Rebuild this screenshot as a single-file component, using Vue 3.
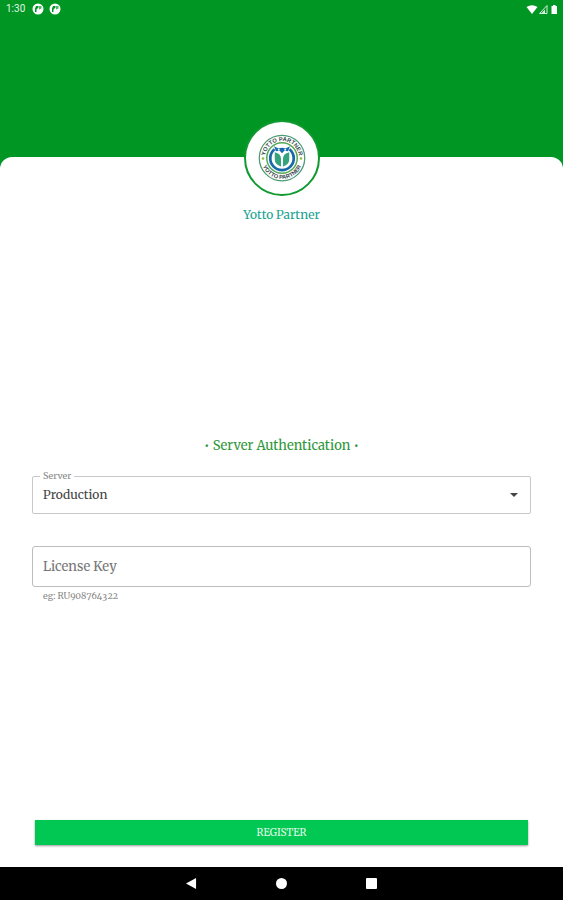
<script setup>
import { ref } from 'vue'

const server = ref('production')
const licenseKey = ref('')
</script>

<template>
  <div class="screen">
    <header class="status">
      <div class="status-left">
        <span>1:30</span>
        <svg v-for="n in 2" :key="n" class="notice" viewBox="0 0 24 24" aria-hidden="true">
          <circle cx="12" cy="12" r="11" fill="#fff" />
          <path d="M8 6H13V9L9 13V18H6V11Z" fill="#009624" />
          <path d="M14 6H19V11L14 13Z" fill="#4db466" />
        </svg>
      </div>
      <svg class="signals" viewBox="0 0 66 22" aria-hidden="true">
        <path d="M1 6Q12-1 23 6L12 20Z" fill="#fff" />
        <path d="M27 19L42 3V19Z" fill="none" stroke="#d5efd9" stroke-width="2" />
        <path d="M31 18L38 11V18Z" fill="#d5efd9" />
        <path d="M51 4h3V2h5v2h3v16H51Z" fill="#fff" />
      </svg>
    </header>

    <main class="sheet">
      <div class="brand">
        <div class="badge">
          <svg class="logo" viewBox="0 0 192 192" role="img" aria-label="Yotto Partner">
            <defs>
              <path id="arc-top" d="M28 96A68 68 0 0 1 164 96" />
              <path id="arc-bottom" d="M12 96A84 84 0 0 0 180 96" />
            </defs>
            <circle cx="96" cy="96" r="91" fill="#fff" stroke="#4c9b72" stroke-width="5" />
            <circle cx="96" cy="96" r="61" fill="#fff" stroke="#55a955" stroke-width="6" />
            <text class="seal-text">
              <textPath href="#arc-top" startOffset="50%" text-anchor="middle">YOTTO PARTNER</textPath>
            </text>
            <text class="seal-text">
              <textPath href="#arc-bottom" startOffset="50%" text-anchor="middle">YOTTO PARTNER</textPath>
            </text>
            <circle cx="20" cy="98" r="5" fill="#8bbf3d" />
            <circle cx="172" cy="98" r="5" fill="#8bbf3d" />
            <path d="M66 61A47 47 0 1 0 126 61" fill="none" stroke="#1769a9" stroke-width="11" />
            <path d="M64 49L82 58Q96 52 110 58L128 49L120 69L105 67L96 77L87 67L72 69Z" fill="#1769a9" />
            <circle cx="83" cy="63" r="4" fill="#dff2fa" />
            <circle cx="109" cy="63" r="4" fill="#dff2fa" />
            <path d="M67 73Q92 78 92 99V130Q67 122 67 100Z" fill="#35a37c" />
            <path d="M125 73Q100 78 100 99V130Q125 122 125 100Z" fill="#35a37c" />
          </svg>
        </div>
        <h1>Yotto Partner</h1>
      </div>

      <form id="register-form" class="form" @submit.prevent>
        <h2>• Server Authentication •</h2>
        <fieldset class="server">
          <legend><label for="server">Server</label></legend>
          <select id="server" v-model="server">
            <option value="production">Production</option>
          </select>
          <svg class="caret" viewBox="0 0 8 4" aria-hidden="true">
            <path d="M0 0h8L4 4Z" fill="#444" />
          </svg>
        </fieldset>
        <input
          v-model="licenseKey"
          class="license"
          type="text"
          placeholder="License Key"
          aria-label="License Key"
          aria-describedby="license-hint"
        />
        <p id="license-hint" class="hint">eg: RU908764322</p>
      </form>

      <button class="register" type="submit" form="register-form">REGISTER</button>
    </main>

    <nav class="system-nav" aria-label="System navigation">
      <button type="button" aria-label="Back">
        <svg viewBox="0 0 12 12"><path d="M0 6L11 0V12Z" fill="#fff" /></svg>
      </button>
      <button type="button" aria-label="Home">
        <svg viewBox="0 0 12 12"><circle cx="6" cy="6" r="6" fill="#fff" /></svg>
      </button>
      <button type="button" aria-label="Recent apps">
        <svg viewBox="0 0 12 12"><rect width="12" height="12" rx="1" fill="#fff" /></svg>
      </button>
    </nav>
  </div>
</template>

<style>
body {
  margin: 0;
}
</style>

<style scoped>
* {
  box-sizing: border-box;
}

.screen {
  display: flex;
  flex-direction: column;
  min-height: 100vh;
  background: #009624;
  font-family: Merriweather, "Liberation Serif", serif;
}

.status {
  display: flex;
  justify-content: space-between;
  align-items: center;
  height: 18px;
  margin-bottom: 139px;
  padding: 0 4px 0 6px;
  color: #e2f4e4;
  font: 10px/18px Roboto, sans-serif;
}

.status-left {
  display: flex;
  align-items: center;
  gap: 5px;
}

.status-left span {
  margin-right: 2px;
}

.notice {
  width: 12px;
  height: 12px;
}

.signals {
  width: 33px;
  height: 11px;
}

.sheet {
  display: flex;
  flex: 1;
  flex-direction: column;
  padding: 0 32px 22px;
  border-radius: 12px 12px 0 0;
  background: #fff;
}

.brand {
  display: flex;
  flex-direction: column;
  align-items: center;
  margin-top: -37px;
}

.badge {
  display: grid;
  place-items: center;
  width: 76px;
  height: 76px;
  border: 2px solid #109a30;
  border-radius: 50%;
  background: #fff;
}

.logo {
  width: 48px;
  height: 48px;
}

.seal-text {
  fill: #37464a;
  font: bold 23px "Liberation Sans", sans-serif;
}

h1 {
  margin: 10px 0 0;
  color: #20a292;
  font-size: 12px;
  font-weight: 400;
  line-height: 18px;
}

.form {
  display: flex;
  flex-direction: column;
  margin: auto 0;
  padding-bottom: 6px;
}

h2 {
  margin: 0 0 15px;
  color: #2f973a;
  font-size: 13px;
  font-weight: 400;
  line-height: 20px;
  text-align: center;
}

.server {
  display: flex;
  align-items: center;
  position: relative;
  min-width: 0;
  height: 43px;
  margin: 0;
  padding: 0;
  border: 1px solid #c8c8c8;
  border-radius: 2px;
}

legend {
  margin-left: 7px;
  padding: 0 3px;
  color: #888;
  font-size: 9px;
  line-height: 10px;
}

legend label {
  display: block;
}

select {
  width: 100%;
  height: 28px;
  padding: 0 10px;
  border: 0;
  outline: 0;
  appearance: none;
  background: transparent;
  color: #444;
  font: 12px/20px Merriweather, "Liberation Serif", serif;
}

.caret {
  position: absolute;
  right: 12px;
  width: 8px;
  height: 4px;
  pointer-events: none;
}

.license {
  width: 100%;
  height: 41px;
  margin-top: 32px;
  padding: 0 10px;
  border: 1px solid #bdbdbd;
  border-radius: 3px;
  outline: 0;
  background: #fff;
  color: #444;
  font: 13px/20px Merriweather, "Liberation Serif", serif;
}

.license::placeholder {
  color: #777;
  opacity: 1;
}

.hint {
  margin: 3px 0 0;
  padding-left: 11px;
  color: #888;
  font-size: 9px;
  font-variant-numeric: oldstyle-nums tabular-nums;
  line-height: 12px;
}

.register {
  height: 25px;
  margin: 0 3px;
  padding: 0;
  border: 0;
  background: #00c853;
  box-shadow: 0 1px 2px #0006;
  color: #e5fae9;
  font: 10px/25px Merriweather, "Liberation Serif", serif;
}

.system-nav {
  display: flex;
  justify-content: center;
  align-items: center;
  gap: 66px;
  height: 33px;
  background: #000;
}

.system-nav button {
  display: grid;
  place-items: center;
  width: 24px;
  height: 24px;
  padding: 0;
  border: 0;
  background: transparent;
}

.system-nav svg {
  width: 11px;
  height: 11px;
}
</style>
